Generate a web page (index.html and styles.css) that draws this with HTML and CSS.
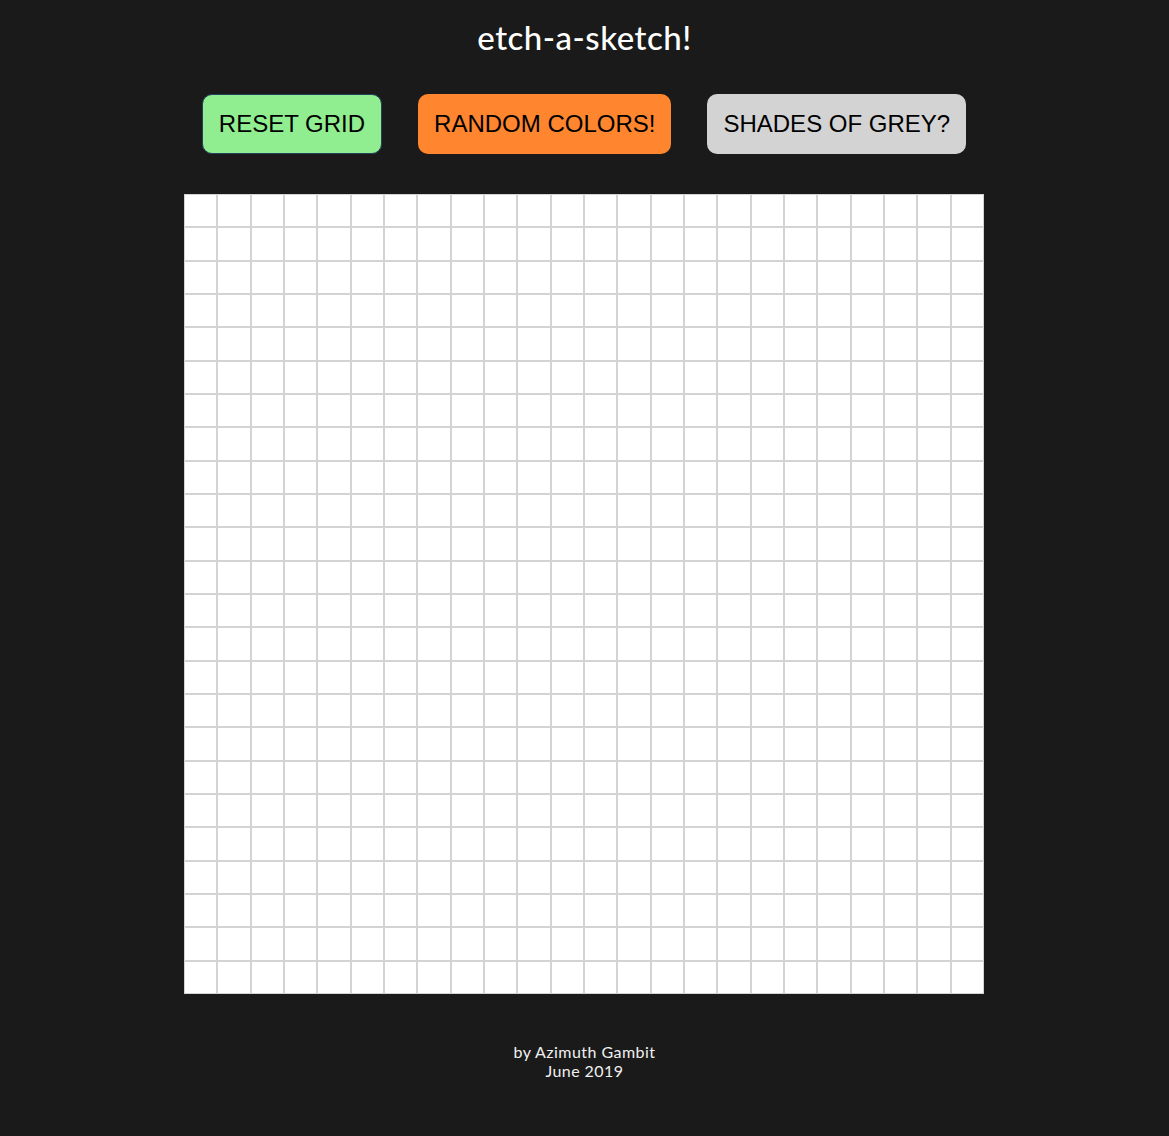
FILE: index.html
```html
<!DOCTYPE html>
<html lang="en">
<head>
<meta charset="utf-8">
<title>etch-a-sketch!</title>
<link rel="stylesheet" href="styles.css">
</head>
<body>
<header class="header">
  <h1 class="title">etch-a-sketch!</h1>
</header>
<div class="controls">
  <button class="btn btn-reset">RESET GRID</button>
  <button class="btn btn-random">RANDOM COLORS!</button>
  <button class="btn btn-grey">SHADES OF GREY?</button>
</div>
<main class="board">
  <div class="grid" id="grid"></div>
</main>
<footer class="footer">
  <p class="credit">by Azimuth Gambit</p>
  <p class="credit">June 2019</p>
</footer>
<script src="script.js"></script>
</body>
</html>
```
FILE: styles.css
```css
html, body {
  margin: 0;
  padding: 0;
  background: #1a1a1a;
}
body {
  font-family: "Lato", "Open Sans", sans-serif;
  color: #ffffff;
}
.header {
  display: flex;
  justify-content: center;
  padding-top: 17px;
}
.title {
  margin: 0;
  font-size: 33px;
  line-height: 40px;
  font-weight: 500;
  letter-spacing: 0.5px;
  color: #ffffff;
}
.controls {
  display: flex;
  justify-content: center;
  gap: 36px;
  margin-top: 37px;
  padding-right: 1px;
}
.btn {
  height: 60px;
  padding: 0 16px;
  border: none;
  border-radius: 10px;
  font-family: "Liberation Sans", Arial, sans-serif;
  font-size: 24px;
  color: #000000;
  cursor: pointer;
}
.btn-reset {
  background: #90ee90;
  border: 1px solid #23405e;
  padding: 0 16px;
}
.btn-random {
  background: #ff852f;
}
.btn-grey {
  background: #d3d3d3;
}
.board {
  display: flex;
  justify-content: center;
  margin-top: 40px;
  padding-right: 1px;
}
.grid {
  width: 800px;
  height: 800px;
  display: grid;
  grid-template-columns: repeat(24, 1fr);
  grid-template-rows: repeat(24, 1fr);
  background: #ffffff;
}
.cell {
  border: 1px solid #d3d3d3;
  background: #ffffff;
}
.footer {
  margin-top: 48px;
  text-align: center;
}
.credit {
  margin: 0;
  font-size: 16px;
  line-height: 19px;
  letter-spacing: 0.45px;
  color: #f0f0f0;
}
```
FILE: script.js
```js
var grid = document.getElementById('grid');
for (var i = 0; i < 24 * 24; i++) {
  var c = document.createElement('div');
  c.className = 'cell';
  grid.appendChild(c);
}
```
